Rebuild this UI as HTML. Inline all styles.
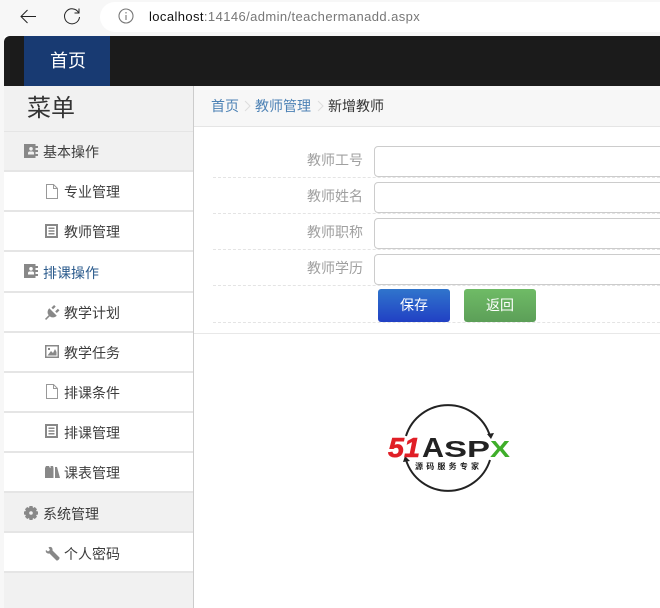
<!DOCTYPE html>
<html><head><meta charset="utf-8">
<style>
html,body{margin:0;padding:0;width:660px;height:608px;overflow:hidden;background:#fff}
body{font-family:"Liberation Sans","WenQuanYi Zen Hei","Noto Sans CJK SC",sans-serif;position:relative}
div,span,svg{position:absolute;box-sizing:border-box}
.t{white-space:nowrap;font-size:14px;line-height:20px;color:#3c3c3c}
.row{left:4px;width:189px;height:40px;background:#fff;border-bottom:2px solid #e5e5e5}
.g{background:#f1f1f1}
.lab{color:#a0a0a0;font-size:14px;line-height:20px;white-space:nowrap;left:307px}
.inp{left:374px;width:300px;height:31px;border:1px solid #ccc;border-radius:4px;background:#fff}
.dash{left:213px;width:447px;border-top:1px dashed #e4e4e4;height:0}
.btn{width:72px;height:33px;border-radius:3px;color:#fff;font-size:14px;line-height:33px;text-align:center}
</style></head><body>
<div style="left:0;top:0;width:660px;height:36px;background:#f7f7f7"></div>
<div style="left:0;top:36px;width:4px;height:572px;background:#f7f7f7"></div>
<svg style="left:18px;top:6px" width="20" height="20" viewBox="0 0 20 20" fill="none" stroke="#222" stroke-width="1"><path d="M18 10.500H3M9.500 4L3 10.500L9.500 17"/></svg>
<svg style="left:62px;top:6px" width="20" height="20" viewBox="0 0 20 20" fill="none" stroke="#222" stroke-width="1"><path d="M16.500 6.500A7.500 7.500 0 1 0 17.500 11M17 2.500V7H12.500"/></svg>
<div style="left:100px;top:2px;width:570px;height:30px;background:#fff;border-radius:15px 0 0 15px"></div>
<svg style="left:118px;top:8px" width="16" height="16" viewBox="0 0 16 16" fill="none" stroke="#777" stroke-width="1.100"><circle cx="8" cy="8" r="7"/><path d="M8 7V12M8 4V5.500"/></svg>
<div class="t" style="left:149px;top:7px;font-size:13px;color:#777;letter-spacing:.4px"><span style="position:static;color:#111">localhost</span>:14146/admin/teachermanadd.aspx</div>

<div style="left:4px;top:36px;width:656px;height:50px;background:#1b1b1b;border-radius:6px 0 0 0"></div>
<div style="left:24px;top:36px;width:86px;height:50px;background:#183a72"></div>
<div class="t" style="left:50px;top:49px;font-size:18px;line-height:24px;color:#fff">首页</div>

<div style="left:4px;top:86px;width:190px;height:522px;background:#f1f1f1;border-right:1px solid #ccc"></div>
<div class="t" style="left:27px;top:94px;font-size:24px;line-height:30px;color:#333">菜单</div>
<div style="left:4px;top:131px;width:189px;height:1px;background:#e5e5e5"></div>

<div class="row g" style="top:132px"></div>
<div class="row" style="top:172px"></div>
<div class="row" style="top:212px"></div>
<div class="row" style="top:252px;height:41px"></div>
<div class="row" style="top:293px"></div>
<div class="row" style="top:333px"></div>
<div class="row" style="top:373px"></div>
<div class="row" style="top:413px"></div>
<div class="row" style="top:453px"></div>
<div class="row g" style="top:493px"></div>
<div class="row" style="top:533px"></div>

<div class="t" style="left:43px;top:142px">基本操作</div>
<div class="t" style="left:64px;top:182px">专业管理</div>
<div class="t" style="left:64px;top:222px">教师管理</div>
<div class="t" style="left:43px;top:263px;color:#2a5a8c">排课操作</div>
<div class="t" style="left:64px;top:303px">教学计划</div>
<div class="t" style="left:64px;top:343px">教学任务</div>
<div class="t" style="left:64px;top:383px">排课条件</div>
<div class="t" style="left:64px;top:423px">排课管理</div>
<div class="t" style="left:64px;top:463px">课表管理</div>
<div class="t" style="left:43px;top:504px">系统管理</div>
<div class="t" style="left:64px;top:544px">个人密码</div>

<svg style="left:24px;top:144px" width="14" height="14" viewBox="0 0 14 14"><path fill="#888" fill-rule="evenodd" d="M0 0H11.500V2H14V4H11.500V6H14V8H11.500V10H14V12H11.500V14H0ZM7 3A1.800 1.800 0 1 0 7 6.600A1.800 1.800 0 1 0 7 3ZM4 10.500H10V8.500L9 7.500H5L4 8.500Z"/></svg>
<svg style="left:24px;top:264px" width="14" height="14" viewBox="0 0 14 14"><path fill="#888" fill-rule="evenodd" d="M0 0H11.500V2H14V4H11.500V6H14V8H11.500V10H14V12H11.500V14H0ZM7 3A1.800 1.800 0 1 0 7 6.600A1.800 1.800 0 1 0 7 3ZM4 10.500H10V8.500L9 7.500H5L4 8.500Z"/></svg>
<svg style="left:45px;top:184px" width="14" height="15" viewBox="0 0 14 15" fill="none" stroke="#999"><path d="M1.500 .5H8.500L12.500 4.500V14.500H1.500ZM8.500 .5V4.500H12.500"/></svg>
<svg style="left:45px;top:384px" width="14" height="15" viewBox="0 0 14 15" fill="none" stroke="#999"><path d="M1.500 .5H8.500L12.500 4.500V14.500H1.500ZM8.500 .5V4.500H12.500"/></svg>
<svg style="left:45px;top:224px" width="13" height="14" viewBox="0 0 13 14"><path fill="#888" fill-rule="evenodd" d="M0 0H13V14H0ZM2 2V12H11V2ZM3.500 3.500H9.500V5H3.500ZM3.500 6.300H9.500V7.800H3.500ZM3.500 9H9.500V10.500H3.500Z"/></svg>
<svg style="left:45px;top:424px" width="13" height="14" viewBox="0 0 13 14"><path fill="#888" fill-rule="evenodd" d="M0 0H13V14H0ZM2 2V12H11V2ZM3.500 3.500H9.500V5H3.500ZM3.500 6.300H9.500V7.800H3.500ZM3.500 9H9.500V10.500H3.500Z"/></svg>
<svg style="left:45px;top:305px" width="15" height="15" viewBox="0 0 14 14"><path fill="#888" d="M4 3L11 10C9 12 6 12 4.500 10.500L1 14L0 13L3.500 9.500C2 8 2 5 4 3ZM6 2.500L8.500 0L10 1.500L7.500 4ZM9.500 6L12 3.500L13.500 5L11 7.500Z"/></svg>
<svg style="left:45px;top:345px" width="14" height="13" viewBox="0 0 14 13"><path fill="#888" fill-rule="evenodd" d="M0 0H14V13H0ZM1.500 1.500V11.500H12.500V1.500ZM2.500 10.500L6 6L8 8L10 4L11.500 7V10.500ZM3 3H5V5H3Z"/></svg>
<svg style="left:45px;top:466px" width="15" height="12" viewBox="0 0 15 12"><path fill="#888" d="M0 2L1 0H4L5 2H5.500V0H8L8.500 2V12H0ZM10 1H12L15 12H10Z"/></svg>
<svg style="left:24px;top:506px" width="14" height="14" viewBox="0 0 14 14"><path fill="#888" fill-rule="evenodd" d="M5.500 0H8.500L9 2L10.800 1L13 3.200L12 5L14 5.500V8.500L12 9L13 10.800L10.800 13L9 12L8.500 14H5.500L5 12L3.200 13L1 10.800L2 9L0 8.500V5.500L2 5L1 3.200L3.200 1L5 2ZM7 5.200A1.800 1.800 0 1 0 7 8.800A1.800 1.800 0 1 0 7 5.200Z"/></svg>
<svg style="left:45px;top:546px" width="15" height="15" viewBox="0 0 15 15"><path fill="#888" d="M1 4L3 5.500L5 4L3.500 1.500C5.500 0 8 1.500 7.500 4.500L14.500 11.500C15 12.500 13 15 11.500 14.500L4.500 7.500C2 8 0 6 1 4Z"/></svg>

<div style="left:194px;top:86px;width:466px;height:41px;background:#f7f7f7;border-bottom:1px solid #e5e5e5"></div>
<div class="t" style="left:211px;top:96px;color:#4d82b5">首页</div>
<svg style="left:244px;top:100px" width="7" height="12" viewBox="0 0 7 12" fill="none" stroke="#ddd"><path d="M1 1L6 6L1 11"/></svg>
<div class="t" style="left:255px;top:96px;color:#4d82b5">教师管理</div>
<svg style="left:317px;top:100px" width="7" height="12" viewBox="0 0 7 12" fill="none" stroke="#ddd"><path d="M1 1L6 6L1 11"/></svg>
<div class="t" style="left:328px;top:96px;color:#333">新增教师</div>

<div class="lab" style="top:150px">教师工号</div>
<div class="lab" style="top:186px">教师姓名</div>
<div class="lab" style="top:222px">教师职称</div>
<div class="lab" style="top:258px">教师学历</div>
<div class="inp" style="top:146px"></div>
<div class="inp" style="top:182px"></div>
<div class="inp" style="top:218px"></div>
<div class="inp" style="top:254px"></div>
<div class="dash" style="top:177px"></div>
<div class="dash" style="top:213px"></div>
<div class="dash" style="top:249px"></div>
<div class="dash" style="top:285px"></div>
<div class="dash" style="top:322px"></div>
<div class="btn" style="left:378px;top:289px;background:linear-gradient(#3075cc,#2140c4)">保存</div>
<div class="btn" style="left:464px;top:289px;background:linear-gradient(#6fbb66,#5c9f58)">返回</div>
<div style="left:194px;top:333px;width:466px;height:1px;background:#e8e8e8"></div>

<svg style="left:385px;top:400px" width="130" height="96" viewBox="0 0 130 96">
<path d="M21 36A44 44 0 0 1 105 36" fill="none" stroke="#222" stroke-width="2"/>
<path d="M102 34L109 33L106 39Z" fill="#222"/>
<path d="M105 60A44 44 0 0 1 21 60" fill="none" stroke="#222" stroke-width="2"/>
<path d="M18 62L25 61L20 56Z" fill="#222"/>
<text x="3" y="57" font-family="Liberation Sans" font-weight="bold" font-style="italic" font-size="28" fill="#e01e26" stroke="#e01e26" stroke-width=".6" textLength="32" lengthAdjust="spacingAndGlyphs">51</text>
<text x="37" y="57" font-family="Liberation Sans" font-weight="bold" font-size="28" fill="#222" textLength="22" lengthAdjust="spacingAndGlyphs">A</text>
<text x="59" y="57" font-family="Liberation Sans" font-weight="bold" font-size="23" fill="#222" textLength="46" lengthAdjust="spacingAndGlyphs">SP</text>
<text x="105" y="57" font-family="Liberation Sans" font-weight="bold" font-size="23" fill="#3fae2a" textLength="20" lengthAdjust="spacingAndGlyphs">X</text>
<text x="30" y="69" font-family="Liberation Sans,Noto Sans CJK SC,sans-serif" font-weight="bold" font-size="8" fill="#222" textLength="64">源码服务专家</text>
</svg>
</body></html>
